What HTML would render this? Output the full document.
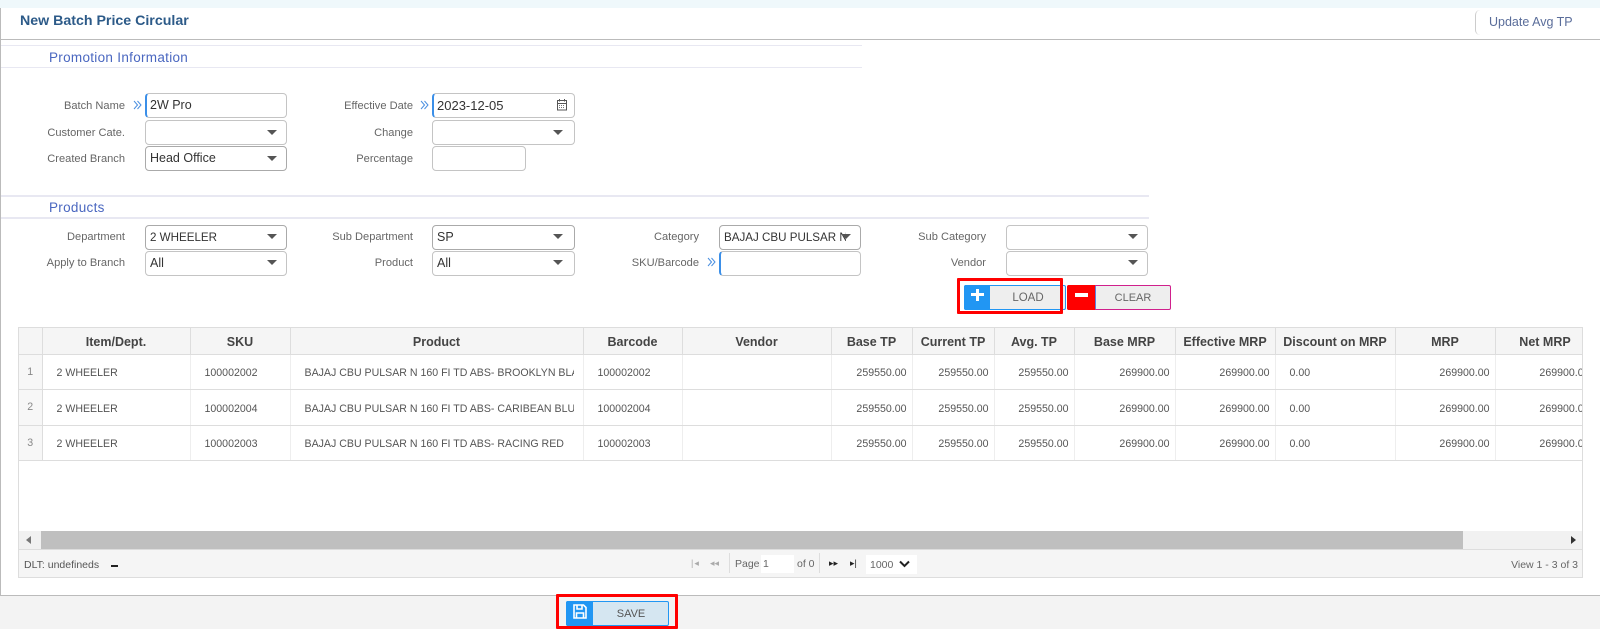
<!DOCTYPE html>
<html><head><meta charset="utf-8"><style>
html,body{margin:0;padding:0}
body{width:1600px;height:629px;overflow:hidden;background:#fff;position:relative;font-family:"Liberation Sans",sans-serif;font-size:12px;color:#555}
.a{position:absolute;white-space:nowrap}
.lb{position:absolute;white-space:nowrap;text-align:right;font-size:11.1px;color:#666;line-height:16px}
.in{position:absolute;box-sizing:border-box;width:142px;height:25px;border:1px solid #c4c4c4;border-radius:4px;background:#fff;font-size:12.5px;color:#333;line-height:23px;padding-left:4px;white-space:nowrap;overflow:hidden}
.w2{width:143px}
.dk{border-color:#aaa}
.req{border-left:2px solid #3b8fe8;padding-left:3px}
.ar{position:absolute;width:0;height:0;border-left:5px solid transparent;border-right:5px solid transparent;border-top:5px solid #555}
.ch{position:absolute;width:9px;height:10px}
.sec{position:absolute;left:49px;font-size:13.5px;color:#4a67c0;letter-spacing:.3px;line-height:18px}
.ln{position:absolute;left:1px;background:#e8e8f2}
table{border-collapse:collapse;table-layout:fixed;position:absolute;left:0;top:0;width:1576px}
th{height:26px;padding:2px 0 0;box-sizing:border-box;background:#f5f5f5;border-right:1px solid #ddd;border-bottom:1px solid #ddd;font-size:12.5px;color:#444;text-align:center;white-space:nowrap;overflow:hidden}
td{padding:3px 5px 0 14px;border-right:1px solid #eee;border-bottom:1px solid #ddd;font-size:10.6px;color:#555;white-space:nowrap;overflow:hidden}
td.r{text-align:right}
td.n{background:#f7f7f7;padding:0;text-align:center;color:#888;border-right:1px solid #ddd}
.cl{display:block;width:269px;overflow:hidden}
</style></head><body>
<div class="a" style="left:0;top:0;width:1600px;height:8px;background:#eff8fb"></div>
<div class="a" style="left:0;top:8px;width:1px;height:587px;background:#bbb"></div>
<div class="a" style="left:20px;top:12px;font-size:14.2px;line-height:18px;font-weight:bold;color:#2c5a88">New Batch Price Circular</div>
<div class="a" style="left:1475px;top:10px;width:8px;height:25px;box-sizing:border-box;border-left:1px solid #ccc;border-radius:5px 0 0 5px"></div>
<div class="a" style="left:1489px;top:14px;font-size:12.5px;line-height:16px;color:#5a6d9a">Update Avg TP</div>
<div class="a" style="left:0;top:39px;width:1600px;height:1px;background:#bbb"></div>

<div class="ln" style="top:45px;width:861px;height:1px"></div>
<div class="sec" style="top:49px">Promotion Information</div>
<div class="ln" style="top:67px;width:861px;height:1px"></div>

<div class="lb" style="right:1475px;top:98px">Batch Name</div>
<svg class="ch" style="left:133px;top:100px" viewBox="0 0 9 10"><path d="M1 1l3.500 4L1 9M4.500 1L8 5 4.500 9" fill="none" stroke="#4a8fe0" stroke-width="1"/></svg>
<div class="in req" style="left:145px;top:93px">2W Pro</div>
<div class="lb" style="right:1475px;top:125px">Customer Cate.</div>
<div class="in" style="left:145px;top:120px"></div><div class="ar" style="left:267px;top:130px"></div>
<div class="lb" style="right:1475px;top:151px">Created Branch</div>
<div class="in dk" style="left:145px;top:146px">Head Office</div><div class="ar" style="left:267px;top:156px"></div>

<div class="lb" style="right:1187px;top:98px">Effective Date</div>
<svg class="ch" style="left:420px;top:100px" viewBox="0 0 9 10"><path d="M1 1l3.500 4L1 9M4.500 1L8 5 4.500 9" fill="none" stroke="#4a8fe0" stroke-width="1"/></svg>
<div class="in req w2" style="left:432px;top:93px;font-size:13px">2023-12-05</div>
<svg class="a" style="left:556px;top:98px" width="12" height="13" viewBox="0 0 12 13"><path d="M1.500 2.500h9v9.500h-9zM1.500 5.500h9M3.500 1v2.500M8.500 1v2.500" fill="none" stroke="#555" stroke-width="1"/><path d="M3 7.500h6M3 9.500h6" stroke="#777" stroke-width="1" stroke-dasharray="1 1"/></svg>
<div class="lb" style="right:1187px;top:125px">Change</div>
<div class="in w2" style="left:432px;top:120px"></div><div class="ar" style="left:553px;top:130px"></div>
<div class="lb" style="right:1187px;top:151px">Percentage</div>
<div class="in" style="left:432px;top:146px;width:94px"></div>

<div class="ln" style="top:195px;width:1148px;height:2px"></div>
<div class="sec" style="top:199px">Products</div>
<div class="ln" style="top:217px;width:1148px;height:2px"></div>

<div class="lb" style="right:1475px;top:229px">Department</div>
<div class="in dk" style="left:145px;top:225px;font-size:11.6px">2 WHEELER</div><div class="ar" style="left:267px;top:234px"></div>
<div class="lb" style="right:1475px;top:255px">Apply to Branch</div>
<div class="in" style="left:145px;top:251px">All</div><div class="ar" style="left:267px;top:260px"></div>

<div class="lb" style="right:1187px;top:229px">Sub Department</div>
<div class="in dk w2" style="left:432px;top:225px">SP</div><div class="ar" style="left:553px;top:234px"></div>
<div class="lb" style="right:1187px;top:255px">Product</div>
<div class="in w2" style="left:432px;top:251px">All</div><div class="ar" style="left:553px;top:260px"></div>

<div class="lb" style="right:901px;top:229px">Category</div>
<div class="in dk" style="left:719px;top:225px;font-size:11.6px"><span style="display:block;width:122px;overflow:hidden">BAJAJ CBU PULSAR N 160</span></div><div class="ar" style="left:841px;top:234px"></div>
<div class="lb" style="right:901px;top:255px">SKU/Barcode</div>
<svg class="ch" style="left:707px;top:257px" viewBox="0 0 9 10"><path d="M1 1l3.500 4L1 9M4.500 1L8 5 4.500 9" fill="none" stroke="#4a8fe0" stroke-width="1"/></svg>
<div class="in req" style="left:719px;top:251px"></div>

<div class="lb" style="right:614px;top:229px">Sub Category</div>
<div class="in" style="left:1006px;top:225px;width:142px"></div><div class="ar" style="left:1128px;top:234px"></div>
<div class="lb" style="right:614px;top:255px">Vendor</div>
<div class="in" style="left:1006px;top:251px;width:142px"></div><div class="ar" style="left:1128px;top:260px"></div>

<!-- LOAD -->
<div class="a" style="left:964px;top:285px;width:102px;height:25px;box-sizing:border-box;border:1px solid #2196f3;border-radius:2px;background:#eee"></div>
<div class="a" style="left:964px;top:285px;width:26px;height:25px;background:#2196f3;border-radius:2px 0 0 2px"></div>
<div class="a" style="left:971px;top:293px;width:13px;height:3px;background:#fff"></div>
<div class="a" style="left:976px;top:289px;width:3px;height:12px;background:#fff"></div>
<div class="a" style="left:993px;top:290px;width:70px;text-align:center;font-size:11.5px;line-height:16px;color:#666">LOAD</div>
<div class="a" style="left:957px;top:278px;width:106px;height:36px;box-sizing:border-box;border:3px solid #f00;border-radius:1px"></div>
<!-- CLEAR -->
<div class="a" style="left:1067px;top:285px;width:104px;height:25px;box-sizing:border-box;border:1px solid #d0208c;border-radius:2px;background:#eee"></div>
<div class="a" style="left:1067px;top:285px;width:28px;height:25px;background:#f00;border-radius:2px 0 0 2px"></div>
<div class="a" style="left:1095px;top:286px;width:1px;height:23px;background:#5c7fe0"></div>
<div class="a" style="left:1075px;top:293px;width:13px;height:4px;background:#fff"></div>
<div class="a" style="left:1096px;top:290px;width:74px;text-align:center;font-size:11px;line-height:16px;color:#666">CLEAR</div>

<!-- GRID -->
<div class="a" style="left:18px;top:327px;width:1565px;height:251px;box-sizing:border-box;border:1px solid #ddd;overflow:hidden;background:#fff">
<table>
<colgroup><col style="width:23px"><col style="width:148px"><col style="width:100px"><col style="width:293px"><col style="width:99px"><col style="width:149px"><col style="width:81px"><col style="width:82px"><col style="width:80px"><col style="width:101px"><col style="width:100px"><col style="width:120px"><col style="width:100px"><col style="width:100px"></colgroup>
<tr><th></th><th>Item/Dept.</th><th>SKU</th><th>Product</th><th>Barcode</th><th>Vendor</th><th>Base TP</th><th>Current TP</th><th>Avg. TP</th><th>Base MRP</th><th>Effective MRP</th><th>Discount on MRP</th><th>MRP</th><th>Net MRP</th></tr>
<tr style="height:35px"><td class="n">1</td><td>2 WHEELER</td><td>100002002</td><td><span class="cl">BAJAJ CBU PULSAR N 160 FI TD ABS- BROOKLYN BLACK</span></td><td>100002002</td><td></td><td class="r">259550.00</td><td class="r">259550.00</td><td class="r">259550.00</td><td class="r">269900.00</td><td class="r">269900.00</td><td>0.00</td><td class="r">269900.00</td><td class="r">269900.00</td></tr>
<tr style="height:36px"><td class="n">2</td><td>2 WHEELER</td><td>100002004</td><td><span class="cl">BAJAJ CBU PULSAR N 160 FI TD ABS- CARIBEAN BLUE</span></td><td>100002004</td><td></td><td class="r">259550.00</td><td class="r">259550.00</td><td class="r">259550.00</td><td class="r">269900.00</td><td class="r">269900.00</td><td>0.00</td><td class="r">269900.00</td><td class="r">269900.00</td></tr>
<tr style="height:35px"><td class="n">3</td><td>2 WHEELER</td><td>100002003</td><td><span class="cl">BAJAJ CBU PULSAR N 160 FI TD ABS- RACING RED</span></td><td>100002003</td><td></td><td class="r">259550.00</td><td class="r">259550.00</td><td class="r">259550.00</td><td class="r">269900.00</td><td class="r">269900.00</td><td>0.00</td><td class="r">269900.00</td><td class="r">269900.00</td></tr>
</table>
<div class="a" style="left:0;top:203px;width:1563px;height:18px;background:#f1f1f1"></div>
<div class="a" style="left:22px;top:203px;width:1422px;height:18px;background:#bfbfbf"></div>
<div class="a" style="left:7px;top:208px;width:0;height:0;border-top:4px solid transparent;border-bottom:4px solid transparent;border-right:5px solid #777"></div>
<div class="a" style="left:1552px;top:208px;width:0;height:0;border-top:4px solid transparent;border-bottom:4px solid transparent;border-left:5px solid #333"></div>
<div class="a" style="left:0;top:221px;width:1563px;height:28px;background:#f5f5f5;border-top:1px solid #ddd"></div>
</div>
<div class="a" style="left:24px;top:558px;font-size:10.5px;line-height:14px;color:#555">DLT: undefineds</div>
<div class="a" style="left:111px;top:565px;width:7px;height:2px;background:#222"></div>
<div class="a" style="left:691px;top:559px;font-size:9px;line-height:9px;color:#aaa;letter-spacing:1px">|◂</div>
<div class="a" style="left:710px;top:559px;font-size:9px;line-height:9px;color:#aaa">◂◂</div>
<div class="a" style="left:729px;top:553px;width:1px;height:20px;background:#ddd"></div>
<div class="a" style="left:735px;top:557px;font-size:10.5px;line-height:14px;color:#666">Page</div>
<div class="a" style="left:761px;top:555px;width:33px;height:18px;background:#fff;font-size:10.5px;line-height:18px;color:#666;text-indent:2px">1</div>
<div class="a" style="left:797px;top:557px;font-size:10.5px;line-height:14px;color:#666">of 0</div>
<div class="a" style="left:819px;top:553px;width:1px;height:20px;background:#ddd"></div>
<div class="a" style="left:829px;top:559px;font-size:9px;line-height:9px;color:#222">▸▸</div>
<div class="a" style="left:850px;top:559px;font-size:9px;line-height:9px;color:#222">▸|</div>
<div class="a" style="left:866px;top:555px;width:51px;height:19px;background:#fff"></div>
<div class="a" style="left:870px;top:558px;font-size:10.5px;line-height:14px;color:#666">1000</div>
<svg class="a" style="left:899px;top:560px" width="11" height="8" viewBox="0 0 11 8"><path d="M1 1.500l4.500 4.500L10 1.500" fill="none" stroke="#222" stroke-width="2"/></svg>
<div class="a" style="right:22px;top:558px;font-size:10.5px;line-height:14px;color:#666">View 1 - 3 of 3</div>

<!-- FOOTER -->
<div class="a" style="left:0;top:595px;width:1600px;height:34px;background:#f3f3f3;border-top:1px solid #bbb;box-sizing:border-box"></div>
<div class="a" style="left:566px;top:601px;width:103px;height:25px;box-sizing:border-box;border:1px solid #2196f3;border-radius:2px;background:#d5e6f1"></div>
<div class="a" style="left:566px;top:601px;width:27px;height:25px;background:#2196f3;border-radius:2px 0 0 2px"></div>
<svg class="a" style="left:573px;top:604px" width="14" height="15" viewBox="0 0 14 15"><path d="M1 1h9.500L13 3.500V14H1z" fill="none" stroke="#fff" stroke-width="1.600"/><path d="M4 1v4h5V1M3.500 14V9h7v5" fill="none" stroke="#fff" stroke-width="1.600"/></svg>
<div class="a" style="left:593px;top:606px;width:76px;text-align:center;font-size:11px;line-height:16px;color:#555">SAVE</div>
<div class="a" style="left:556px;top:594px;width:122px;height:35px;box-sizing:border-box;border:3px solid #f00;border-radius:1px"></div>
</body></html>
